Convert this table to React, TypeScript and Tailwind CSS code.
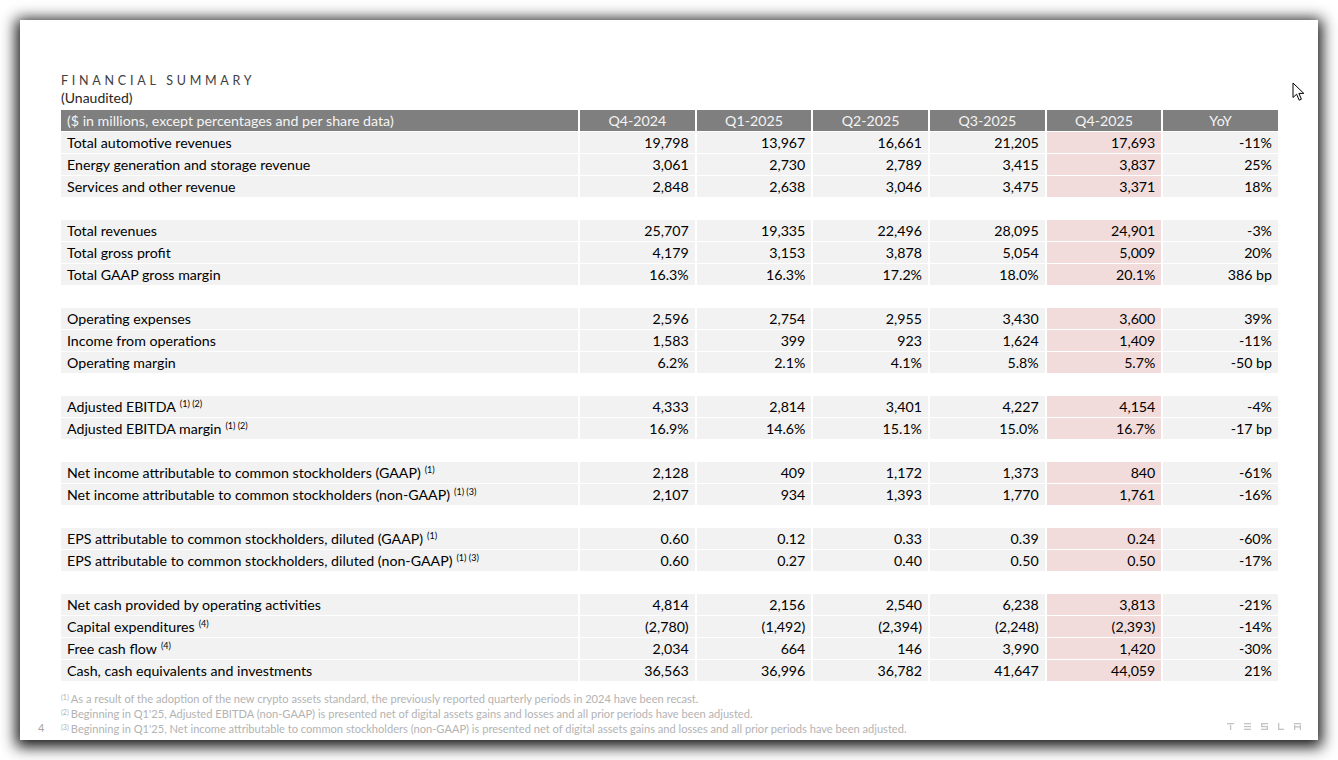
import React from "react";

type Row = { label: string; sup?: string; v: string[] } | null;

const rows: Row[] = [
  { label: "Total automotive revenues", v: ["19,798", "13,967", "16,661", "21,205", "17,693", "-11%"] },
  { label: "Energy generation and storage revenue", v: ["3,061", "2,730", "2,789", "3,415", "3,837", "25%"] },
  { label: "Services and other revenue", v: ["2,848", "2,638", "3,046", "3,475", "3,371", "18%"] },
  null,
  { label: "Total revenues", v: ["25,707", "19,335", "22,496", "28,095", "24,901", "-3%"] },
  { label: "Total gross profit", v: ["4,179", "3,153", "3,878", "5,054", "5,009", "20%"] },
  { label: "Total GAAP gross margin", v: ["16.3%", "16.3%", "17.2%", "18.0%", "20.1%", "386 bp"] },
  null,
  { label: "Operating expenses", v: ["2,596", "2,754", "2,955", "3,430", "3,600", "39%"] },
  { label: "Income from operations", v: ["1,583", "399", "923", "1,624", "1,409", "-11%"] },
  { label: "Operating margin", v: ["6.2%", "2.1%", "4.1%", "5.8%", "5.7%", "-50 bp"] },
  null,
  { label: "Adjusted EBITDA", sup: "(1) (2)", v: ["4,333", "2,814", "3,401", "4,227", "4,154", "-4%"] },
  { label: "Adjusted EBITDA margin", sup: "(1) (2)", v: ["16.9%", "14.6%", "15.1%", "15.0%", "16.7%", "-17 bp"] },
  null,
  { label: "Net income attributable to common stockholders (GAAP)", sup: "(1)", v: ["2,128", "409", "1,172", "1,373", "840", "-61%"] },
  { label: "Net income attributable to common stockholders (non-GAAP)", sup: "(1) (3)", v: ["2,107", "934", "1,393", "1,770", "1,761", "-16%"] },
  null,
  { label: "EPS attributable to common stockholders, diluted (GAAP)", sup: "(1)", v: ["0.60", "0.12", "0.33", "0.39", "0.24", "-60%"] },
  { label: "EPS attributable to common stockholders, diluted (non-GAAP)", sup: "(1) (3)", v: ["0.60", "0.27", "0.40", "0.50", "0.50", "-17%"] },
  null,
  { label: "Net cash provided by operating activities", v: ["4,814", "2,156", "2,540", "6,238", "3,813", "-21%"] },
  { label: "Capital expenditures", sup: "(4)", v: ["(2,780)", "(1,492)", "(2,394)", "(2,248)", "(2,393)", "-14%"] },
  { label: "Free cash flow", sup: "(4)", v: ["2,034", "664", "146", "3,990", "1,420", "-30%"] },
  { label: "Cash, cash equivalents and investments", v: ["36,563", "36,996", "36,782", "41,647", "44,059", "21%"] },
];

const heads = ["Q4-2024", "Q1-2025", "Q2-2025", "Q3-2025", "Q4-2025", "YoY"];

const footnotes = [
  ["(1)", "As a result of the adoption of the new crypto assets standard, the previously reported quarterly periods in 2024 have been recast."],
  ["(2)", "Beginning in Q1'25, Adjusted EBITDA (non-GAAP) is presented net of digital assets gains and losses and all prior periods have been adjusted."],
  ["(3)", "Beginning in Q1'25, Net income attributable to common stockholders (non-GAAP) is presented net of digital assets gains and losses and all prior periods have been adjusted."],
];

function TeslaLogo() {
  return (
    <svg width="74" height="7" viewBox="0 0 74 7" fill="#c4c4c4">
      <rect x="0" y="0" width="7" height="1.3" />
      <rect x="2.9" y="1.8" width="1.3" height="5.2" />
      <rect x="17" y="0" width="7" height="1.3" />
      <rect x="17" y="2.9" width="7" height="1.3" />
      <rect x="17" y="5.7" width="7" height="1.3" />
      <rect x="34" y="0" width="7" height="1.3" />
      <rect x="34" y="0" width="1.3" height="4" />
      <rect x="34" y="2.9" width="7" height="1.3" />
      <rect x="39.7" y="2.9" width="1.3" height="4" />
      <rect x="34" y="5.7" width="7" height="1.3" />
      <rect x="51" y="0" width="1.3" height="7" />
      <rect x="51" y="5.7" width="6" height="1.3" />
      <rect x="67" y="0" width="7" height="1.3" />
      <rect x="67" y="1.8" width="1.3" height="5.2" />
      <rect x="72.7" y="1.8" width="1.3" height="5.2" />
      <rect x="67" y="3.2" width="7" height="1.3" />
    </svg>
  );
}

function Cursor() {
  return (
    <svg width="14" height="20" viewBox="0 0 14 20">
      <path
        d="M1 1 L1 15.5 L4.6 12.2 L7.2 18.2 L9.4 17.2 L6.9 11.4 L11.8 11.4 Z"
        fill="#ffffff"
        stroke="#000000"
        strokeWidth="1"
        strokeLinejoin="miter"
      />
    </svg>
  );
}

export default function App() {
  return (
    <div className="w-[1338px] h-[760px] bg-white overflow-hidden relative" style={{ fontFamily: "Lato, 'Open Sans', sans-serif" }}>
      <div className="absolute left-[20px] top-[20px] w-[1298px] h-[720px] bg-white shadow-[0_3px_14px_4px_rgba(0,0,0,0.92)]" />
      <div className="ml-[20px] mt-[20px] w-[1298px] h-[720px] relative overflow-hidden pl-[41px] pt-[53px]">
        <div className="text-[12.5px] leading-[16px] tracking-[0.3em] text-[#404040] h-[16px]">FINANCIAL SUMMARY</div>
        <div className="text-[14px] leading-[18px] text-[#262626] mt-[0px]">(Unaudited)</div>
        <div className="mt-[3px] w-[1217px] flex flex-col gap-y-[1px] text-[14.2px] leading-[21px] text-black">
          <div className="grid grid-cols-[517px_repeat(6,1fr)] gap-x-[2px] h-[21px]">
            <div className="bg-[#7f7f7f] text-[#f4f4f4] pl-[6px]">($ in millions, except percentages and per share data)</div>
            {heads.map((h) => (
              <div key={h} className="bg-[#7f7f7f] text-[#f4f4f4] text-center">{h}</div>
            ))}
          </div>
          {rows.map((r, i) =>
            r === null ? (
              <div key={i} className="h-[21px]" />
            ) : (
              <div key={i} className="grid grid-cols-[517px_repeat(6,1fr)] gap-x-[2px] h-[21px]">
                <div className="bg-[#f2f2f2] pl-[6px] whitespace-nowrap">
                  {r.label}
                  {r.sup && <sup className="text-[9px] ml-[4px] -top-[5px]">{r.sup}</sup>}
                </div>
                {r.v.map((v, j) => (
                  <div key={j} className={`${j === 4 ? "bg-[#f2dcdb]" : "bg-[#f2f2f2]"} text-right pr-[6px]`}>{v}</div>
                ))}
              </div>
            )
          )}
        </div>
        <div className="mt-[10px] text-[11.1px] leading-[15px] text-[#b3b3b3] whitespace-nowrap">
          {footnotes.map(([s, t]) => (
            <div key={s}>
              <sup className="text-[7px] mr-[2px] -top-[3px]">{s}</sup>
              {t}
            </div>
          ))}
        </div>
        <div className="absolute left-[18px] top-[700px] text-[11px] leading-[15px] text-[#a6a6a6]">4</div>
        <div className="absolute left-[1207px] top-[703px]">
          <TeslaLogo />
        </div>
      </div>
      <div className="absolute left-[1292px] top-[82px]">
        <Cursor />
      </div>
    </div>
  );
}
